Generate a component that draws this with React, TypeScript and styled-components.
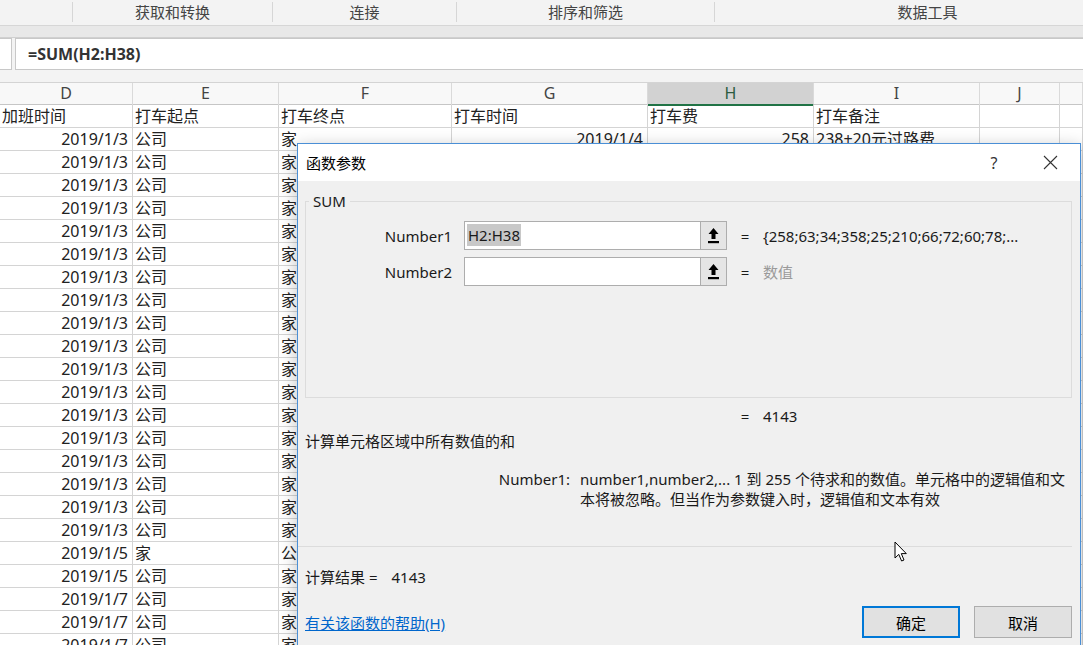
import styled, { createGlobalStyle } from "styled-components";

const GlobalStyle = createGlobalStyle`
  html, body {
    margin: 0;
    padding: 0;
    background: #ffffff;
    overflow: hidden;
  }
  * {
    box-sizing: border-box;
  }
`;

const FONT = `"Noto Sans", "Noto Sans CJK SC", sans-serif`;

const Screen = styled.div`
  position: relative;
  width: 1083px;
  height: 645px;
  overflow: hidden;
  font-family: ${FONT};
  background: #ffffff;
`;

const RibbonGroups = styled.div`
  display: grid;
  grid-template-columns: 72px 200px 184px 258px 426px;
  height: 26px;
  background: #f3f3f3;
  border-bottom: 1px solid #d6d6d6;
  width: 1140px;
`;

const GroupLabel = styled.div<{ $first?: boolean }>`
  border-left: ${(p) => (p.$first ? "none" : "1px solid #d6d6d6")};
  margin: 2px 0 3px;
  text-align: center;
  font-size: 15px;
  line-height: 20px;
  color: #444;
`;

const RibbonBand = styled.div`
  height: 12px;
  background: #e8e8e8;
  border-bottom: 1px solid #d0d0d0;
`;

const FormulaRow = styled.div`
  display: flex;
  height: 32px;
  background: #f3f3f3;
  gap: 3px;
`;

const NameStub = styled.div`
  width: 12px;
  background: #ffffff;
  border: 1px solid #c8c8c8;
  border-left: none;
`;

const FormulaField = styled.div`
  flex: 1;
  background: #ffffff;
  border: 1px solid #c8c8c8;
  border-right: none;
  padding-left: 12px;
  font-size: 16px;
  font-weight: 700;
  line-height: 30px;
  color: #333;
`;

const HeaderGap = styled.div`
  height: 12px;
  background: #f3f3f3;
`;

const COLS = "133px 146px 173px 196px 166px 166px 80px 1fr";

const ColHeadRow = styled.div`
  display: grid;
  grid-template-columns: ${COLS};
  height: 23px;
  background: #f8f8f8;
  border-top: 1px solid #d4d4d4;
  border-bottom: 1px solid #c6c6c6;
`;

const ColHead = styled.div<{ $selected?: boolean }>`
  text-align: center;
  font-size: 16px;
  line-height: 21px;
  color: ${(p) => (p.$selected ? "#2c5c40" : "#444")};
  background: ${(p) => (p.$selected ? "#d2d2d2" : "transparent")};
  border-right: 1px solid #dadada;
  border-bottom: ${(p) => (p.$selected ? "2px solid #217346" : "none")};
`;

const SheetGrid = styled.div`
  display: grid;
  grid-template-columns: ${COLS};
  grid-auto-rows: 23px;
`;

const Cell = styled.div<{ $align?: "left" | "right" }>`
  border-right: 1px solid #d4d4d4;
  border-bottom: 1px solid #d4d4d4;
  padding: 0 4px 0 2px;
  font-size: 16px;
  line-height: 22px;
  color: #222;
  white-space: nowrap;
  overflow: hidden;
  text-align: ${(p) => p.$align ?? "left"};
`;

/* dialog */

const Dialog = styled.div`
  position: absolute;
  left: 297px;
  top: 143px;
  width: 784px;
  height: 520px;
  border: 1px solid #4a8fd6;
  background: #f0f0f0;
  box-shadow: 0 4px 16px rgba(0, 0, 0, 0.25);
  font-size: 15px;
  color: #1a1a1a;
  display: flex;
  flex-direction: column;
`;

const TitleBar = styled.div`
  display: flex;
  align-items: center;
  justify-content: space-between;
  height: 37px;
  background: #ffffff;
  padding: 0 8px 0 8px;
`;

const TitleText = styled.span`
  font-size: 15px;
  color: #000;
`;

const TitleButtons = styled.div`
  display: flex;
  gap: 12px;
`;

const TitleButton = styled.div`
  width: 44px;
  display: flex;
  align-items: center;
  justify-content: center;
  font-size: 16px;
  color: #333;
`;

const Body = styled.div`
  padding: 0 8px 0 7px;
  display: flex;
  flex-direction: column;
`;

const GroupBox = styled.div`
  position: relative;
  margin-top: 20px;
  height: 197px;
  border: 1px solid #dcdcdc;
  padding-top: 19px;
  display: flex;
  flex-direction: column;
  gap: 7px;
`;

const GroupTitle = styled.span`
  position: absolute;
  top: -12px;
  left: 3px;
  padding: 0 4px;
  background: #f0f0f0;
  line-height: 22px;
`;

const ArgRow = styled.div`
  display: grid;
  grid-template-columns: 146px 12px 236px 27px 36px 1fr;
  align-items: center;
  height: 29px;
`;

const ArgLabel = styled.span`
  grid-column: 1;
  text-align: right;
`;

const ArgInput = styled.div`
  grid-column: 3;
  height: 29px;
  background: #ffffff;
  border: 1px solid #adadad;
  border-right: none;
  padding: 0 2px;
  line-height: 27px;
  font-size: 15px;
`;

const Selected = styled.span`
  background: #c8c8c8;
  padding: 1px 1px;
`;

const CollapseButton = styled.div`
  grid-column: 4;
  height: 29px;
  background: #e5e5e5;
  border: 1px solid #adadad;
  display: flex;
  align-items: center;
  justify-content: center;
`;

const Eq = styled.span`
  grid-column: 5;
  text-align: center;
`;

const EqValue = styled.span<{ $muted?: boolean }>`
  grid-column: 6;
  white-space: nowrap;
  color: ${(p) => (p.$muted ? "#9a9a9a" : "#1a1a1a")};
`;

const TotalRow = styled(ArgRow)`
  height: 20px;
  margin-top: 8px;
  padding-left: 1px;
`;

const Description = styled.div`
  margin-top: 5px;
  line-height: 20px;
`;

const HelpBlock = styled.div`
  margin-top: 18px;
  display: grid;
  grid-template-columns: 265px 1fr;
  column-gap: 10px;
  line-height: 20px;
`;

const HelpLabel = styled.span`
  text-align: right;
`;

const HelpLine = styled.div`
  white-space: nowrap;
`;

const Footer = styled.div`
  margin-top: 37px;
  margin-right: 8px;
  border-top: 1px solid #dcdcdc;
  padding-left: 7px;
  display: flex;
  flex-direction: column;
`;

const ResultLine = styled.div`
  margin-top: 20px;
  line-height: 20px;
  display: flex;
  gap: 14px;
`;

const Actions = styled.div`
  margin-top: 19px;
  display: flex;
  align-items: center;
  gap: 14px;
`;

const HelpLink = styled.a`
  flex: 1;
  color: #0066cc;
  text-decoration: underline;
  cursor: pointer;
`;

const Button = styled.button<{ $primary?: boolean }>`
  width: 98px;
  height: 32px;
  font-family: ${FONT};
  font-size: 15px;
  color: #000;
  background: #e1e1e1;
  border: ${(p) => (p.$primary ? "2px solid #0078d7" : "1px solid #adadad")};
  padding: 0;
`;

const Pointer = styled.svg`
  position: absolute;
  left: 894px;
  top: 541px;
`;

type Row = { d: string; e: string; f: string; g?: string; h?: string; i?: string };

const rows: Row[] = [
  { d: "2019/1/3", e: "公司", f: "家", g: "2019/1/4", h: "258", i: "238+20元过路费" },
  ...Array.from({ length: 17 }, () => ({ d: "2019/1/3", e: "公司", f: "家" })),
  { d: "2019/1/5", e: "家", f: "公司" },
  { d: "2019/1/5", e: "公司", f: "家" },
  { d: "2019/1/7", e: "公司", f: "家" },
  { d: "2019/1/7", e: "公司", f: "家" },
  { d: "2019/1/7", e: "公司", f: "家" },
];

const UploadIcon = () => (
  <svg width="11" height="17" viewBox="0 0 11 17">
    <polygon points="5.5,1 10.5,7 7.5,7 7.5,12 3.5,12 3.5,7 0.5,7" fill="#000" />
    <rect x="0" y="14" width="11" height="2.2" fill="#000" />
  </svg>
);

const App = () => {
  return (
    <Screen>
      <GlobalStyle />
      <RibbonGroups>
        <GroupLabel $first />
        <GroupLabel>获取和转换</GroupLabel>
        <GroupLabel>连接</GroupLabel>
        <GroupLabel>排序和筛选</GroupLabel>
        <GroupLabel>数据工具</GroupLabel>
      </RibbonGroups>
      <RibbonBand />
      <FormulaRow>
        <NameStub />
        <FormulaField>=SUM(H2:H38)</FormulaField>
      </FormulaRow>
      <HeaderGap />
      <ColHeadRow>
        <ColHead>D</ColHead>
        <ColHead>E</ColHead>
        <ColHead>F</ColHead>
        <ColHead>G</ColHead>
        <ColHead $selected>H</ColHead>
        <ColHead>I</ColHead>
        <ColHead>J</ColHead>
        <ColHead />
      </ColHeadRow>
      <SheetGrid>
        <Cell>加班时间</Cell>
        <Cell>打车起点</Cell>
        <Cell>打车终点</Cell>
        <Cell>打车时间</Cell>
        <Cell>打车费</Cell>
        <Cell>打车备注</Cell>
        <Cell />
        <Cell />
        {rows.map((r, idx) => [
          <Cell key={`d${idx}`} $align="right">{r.d}</Cell>,
          <Cell key={`e${idx}`}>{r.e}</Cell>,
          <Cell key={`f${idx}`}>{r.f}</Cell>,
          <Cell key={`g${idx}`} $align="right">{r.g}</Cell>,
          <Cell key={`h${idx}`} $align="right">{r.h}</Cell>,
          <Cell key={`i${idx}`}>{r.i}</Cell>,
          <Cell key={`j${idx}`} />,
          <Cell key={`k${idx}`} />,
        ])}
      </SheetGrid>

      <Dialog>
        <TitleBar>
          <TitleText>函数参数</TitleText>
          <TitleButtons>
            <TitleButton>?</TitleButton>
            <TitleButton>
              <svg width="15" height="15" viewBox="0 0 15 15">
                <path d="M1 1 L14 14 M14 1 L1 14" stroke="#333" strokeWidth="1.1" />
              </svg>
            </TitleButton>
          </TitleButtons>
        </TitleBar>
        <Body>
          <GroupBox>
            <GroupTitle>SUM</GroupTitle>
            <ArgRow>
              <ArgLabel>Number1</ArgLabel>
              <ArgInput>
                <Selected>H2:H38</Selected>
              </ArgInput>
              <CollapseButton>
                <UploadIcon />
              </CollapseButton>
              <Eq>=</Eq>
              <EqValue>{"{258;63;34;358;25;210;66;72;60;78;..."}</EqValue>
            </ArgRow>
            <ArgRow>
              <ArgLabel>Number2</ArgLabel>
              <ArgInput />
              <CollapseButton>
                <UploadIcon />
              </CollapseButton>
              <Eq>=</Eq>
              <EqValue $muted>数值</EqValue>
            </ArgRow>
          </GroupBox>
          <TotalRow>
            <Eq>=</Eq>
            <EqValue>4143</EqValue>
          </TotalRow>
          <Description>计算单元格区域中所有数值的和</Description>
          <HelpBlock>
            <HelpLabel>Number1:</HelpLabel>
            <div>
              <HelpLine>number1,number2,... 1 到 255 个待求和的数值。单元格中的逻辑值和文</HelpLine>
              <HelpLine>本将被忽略。但当作为参数键入时，逻辑值和文本有效</HelpLine>
            </div>
          </HelpBlock>
        </Body>
        <Footer>
          <ResultLine>
            <span>计算结果 =</span>
            <span>4143</span>
          </ResultLine>
          <Actions>
            <HelpLink>有关该函数的帮助(H)</HelpLink>
            <Button $primary>确定</Button>
            <Button>取消</Button>
          </Actions>
        </Footer>
      </Dialog>

      <Pointer width="14" height="22" viewBox="0 0 14 22">
        <path
          d="M1 1 L1 17 L4.8 13.4 L7.6 20 L10 19 L7.3 12.6 L12.3 12.6 Z"
          fill="#fff"
          stroke="#000"
          strokeWidth="1"
          strokeLinejoin="round"
        />
      </Pointer>
    </Screen>
  );
};

export default App;
